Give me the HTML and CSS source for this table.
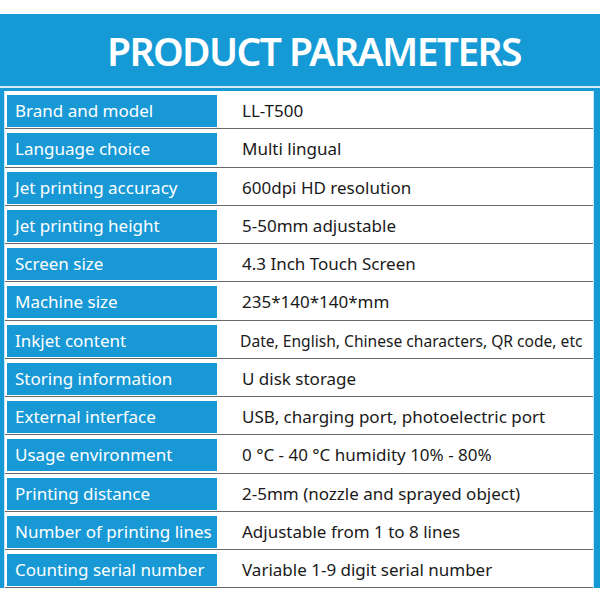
FILE: index.html
```html
<!DOCTYPE html>
<html>
<head>
<meta charset="utf-8">
<link rel="stylesheet" href="styles.css">
</head>
<body>
<div class="page">
  <div class="header"><h1 class="title">PRODUCT PARAMETERS</h1></div>
  <div class="gap"></div>
  <div class="frame">
    <div class="inner">
      <div class="row"><div class="label">Brand and model</div><div class="value">LL-T500</div></div>
      <div class="row"><div class="label">Language choice</div><div class="value">Multi lingual</div></div>
      <div class="row"><div class="label">Jet printing accuracy</div><div class="value">600dpi HD resolution</div></div>
      <div class="row"><div class="label">Jet printing height</div><div class="value">5-50mm adjustable</div></div>
      <div class="row"><div class="label">Screen size</div><div class="value">4.3 Inch Touch Screen</div></div>
      <div class="row"><div class="label">Machine size</div><div class="value">235*140*140*mm</div></div>
      <div class="row"><div class="label">Inkjet content</div><div class="value small">Date, English, Chinese characters, QR code, etc</div></div>
      <div class="row"><div class="label">Storing information</div><div class="value">U disk storage</div></div>
      <div class="row"><div class="label">External interface</div><div class="value">USB, charging port, photoelectric port</div></div>
      <div class="row"><div class="label">Usage environment</div><div class="value">0 °C - 40 °C humidity 10% - 80%</div></div>
      <div class="row"><div class="label">Printing distance</div><div class="value">2-5mm (nozzle and sprayed object)</div></div>
      <div class="row"><div class="label">Number of printing lines</div><div class="value">Adjustable from 1 to 8 lines</div></div>
      <div class="row"><div class="label">Counting serial number</div><div class="value">Variable 1-9 digit serial number</div></div>
    </div>
  </div>
</div>
</body>
</html>
```

FILE: styles.css
```css
html, body {
  margin: 0;
  padding: 0;
  background: #ffffff;
}
.page {
  width: 600px;
  height: 600px;
  overflow: hidden;
  padding-top: 14px;
  box-sizing: border-box;
  font-family: "Noto Sans", "Open Sans", sans-serif;
}
.header {
  height: 72px;
  background: #159ad6;
  display: flex;
  align-items: center;
  justify-content: center;
  padding-left: 28px;
  box-sizing: border-box;
}
.title {
  margin: 0;
  color: #ffffff;
  font-size: 39px;
  font-weight: 600;
  letter-spacing: -1.6px;
  line-height: 1;
}
.gap {
  height: 2px;
  background: #d6edf8;
}
.frame {
  border-left: 4px solid #159ad6;
  border-right: 6px solid #159ad6;
  border-top: 3px solid #159ad6;
}
.inner {
  border-left: 1px solid #c6e4f3;
  border-right: 1px solid #c6e4f3;
  background: #ffffff;
}
.row {
  height: 38.25px;
  box-sizing: border-box;
  padding-top: 4px;
  border-bottom: 1px solid #6b6b6b;
  display: flex;
}
.label {
  width: 210px;
  height: 32px;
  margin-left: 2px;
  background: #1899d6;
  color: #ffffff;
  font-size: 17px;
  line-height: 32px;
  padding-left: 8px;
  box-sizing: border-box;
  white-space: nowrap;
  overflow: hidden;
}
.value {
  height: 32px;
  line-height: 32px;
  padding-left: 25px;
  color: #1a1a1a;
  font-size: 17px;
  white-space: nowrap;
}
.value.small {
  font-size: 15.6px;
  padding-left: 23px;
}
```
